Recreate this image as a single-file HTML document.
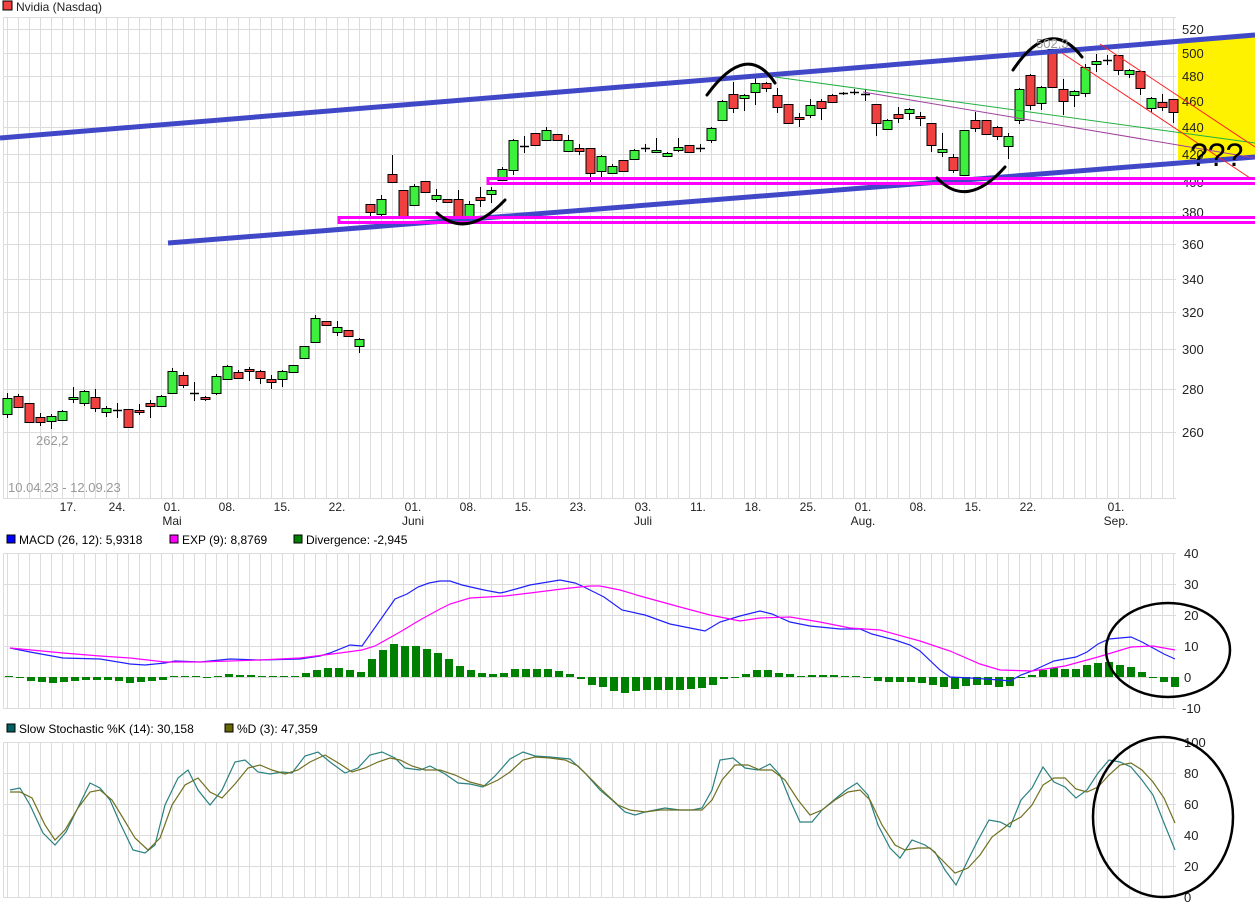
<!DOCTYPE html>
<html><head><meta charset="utf-8"><style>
body{margin:0;background:#fff;width:1255px;height:914px;overflow:hidden;font-family:"Liberation Sans",sans-serif}
svg{display:block}
</style></head><body>
<svg id="s" width="1255" height="914" xmlns="http://www.w3.org/2000/svg" font-family="Liberation Sans, sans-serif" font-size="12">
<rect width="1255" height="914" fill="#fff"/>
<g id="grid" stroke="#dcdcdc" stroke-width="1"></g>
<polygon points="1178,44 1255,36 1255,158 1178,160" fill="#fff200"/>
<g id="axis" fill="#222" font-size="13"></g>
<g id="candles"></g>
<!-- channels -->
<line x1="0" y1="138" x2="1255" y2="35" stroke="#4048c8" stroke-width="5"/>
<line x1="168" y1="243" x2="1255" y2="157" stroke="#4048c8" stroke-width="5"/>
<g fill="none" stroke="#ff00ff" stroke-width="3">
<path d="M1255,178.5 H488 V183.5 H1255"/>
<path d="M1255,217.5 H339 V222.5 H1255"/>
</g>
<line x1="775" y1="77" x2="1255" y2="143" stroke="#20b040" stroke-width="1"/>
<line x1="863" y1="92" x2="1255" y2="158" stroke="#a040a0" stroke-width="1"/>
<line x1="1100" y1="44" x2="1255" y2="147" stroke="#ff2020" stroke-width="1"/>
<line x1="1062" y1="53" x2="1250" y2="178" stroke="#ff2020" stroke-width="1"/>
<g fill="none" stroke="#000" stroke-width="3" stroke-linecap="round">
<path d="M437,213 Q467,240 505,200"/>
<path d="M707,95 Q747,40 775,83"/>
<path d="M937,178 Q967,210 1005,167"/>
<path d="M1013,70 Q1050,15 1082,57"/>
</g>
<text x="1036" y="48" fill="#999" font-size="13">502,3</text>
<text x="36" y="445" fill="#999" font-size="13">262,2</text>
<text x="8" y="492" fill="#999" font-size="13">10.04.23 - 12.09.23</text>
<text x="1190" y="166" fill="#000" font-size="32">???</text>
<!-- title -->
<rect x="3" y="1" width="9" height="9" fill="#f04040" stroke="#000" stroke-width="1"/>
<text x="16" y="11" fill="#222" font-size="12">Nvidia (Nasdaq)</text>
<g id="dates" fill="#222" font-size="12" text-anchor="middle"></g>
<!-- MACD legend -->
<rect x="7" y="535" width="8" height="8" fill="#0000ff" stroke="#000"/>
<text x="19" y="544">MACD (26, 12): 5,9318</text>
<rect x="170" y="535" width="8" height="8" fill="#ff00ff" stroke="#000"/>
<text x="182" y="544">EXP (9): 8,8769</text>
<rect x="294" y="535" width="8" height="8" fill="#008000" stroke="#000"/>
<text x="306" y="544">Divergence: -2,945</text>
<rect x="7" y="724" width="8" height="8" fill="#006060" stroke="#000"/>
<text x="19" y="733">Slow Stochastic %K (14): 30,158</text>
<rect x="225" y="724" width="8" height="8" fill="#666600" stroke="#000"/>
<text x="237" y="733">%D (3): 47,359</text>
<g id="macd"></g>
<ellipse cx="1168" cy="650" rx="62" ry="47" fill="none" stroke="#000" stroke-width="2.5"/>
<ellipse cx="1163" cy="817" rx="70" ry="80" fill="none" stroke="#000" stroke-width="2.5"/>
</svg>
<script>
var NS="http://www.w3.org/2000/svg";
function el(p,t,a,txt){var e=document.createElementNS(NS,t);for(var k in a)e.setAttribute(k,a[k]);if(txt!=null)e.textContent=txt;p.appendChild(e);return e;}
var g=document.getElementById('grid'),ax=document.getElementById('axis');
function vgrid(y1,y2){for(var x=7;x<=1176;x+=11)el(g,'line',{x1:x+.5,y1:y1,x2:x+.5,y2:y2});el(g,'line',{x1:3.5,y1:y1,x2:3.5,y2:y2});}
vgrid(17,498);vgrid(553,708);vgrid(742,897);
var pl=[[520,29],[500,53],[480,76],[460,101],[440,127],[420,154],[400,182],[380,212],[360,244],[340,279],[320,312],[300,349],[280,389],[260,432]];
[17,498].forEach(function(y){el(g,'line',{x1:3,y1:y+.5,x2:1176,y2:y+.5});});
pl.forEach(function(p){el(g,'line',{x1:3,y1:p[1]+.5,x2:1176,y2:p[1]+.5});el(ax,'text',{x:1182,y:p[1]+5},p[0]);});
[[40,553],[30,584],[20,615],[10,646],[0,677],[-10,708]].forEach(function(p){el(g,'line',{x1:3,y1:p[1]+.5,x2:1176,y2:p[1]+.5});el(ax,'text',{x:p[0]<0?1182:1184,y:p[1]+5},p[0]);});
[[100,742],[80,773],[60,804],[40,835],[20,866],[0,897]].forEach(function(p){el(g,'line',{x1:3,y1:p[1]+.5,x2:1176,y2:p[1]+.5});el(ax,'text',{x:1184,y:p[1]+5},p[0]);});
// dates
var d=document.getElementById('dates');
[["17.",68],["24.",117],["01.",172],["08.",227],["15.",282],["22.",337],["01.",413],["08.",468],["15.",523],["23.",578],["03.",643],["11.",698],["18.",753],["25.",808],["01.",863],["08.",918],["15.",973],["22.",1028],["01.",1116]].forEach(function(a){el(d,'text',{x:a[1],y:511},a[0]);});
[["Mai",172],["Juni",413],["Juli",643],["Aug.",863],["Sep.",1116]].forEach(function(a){el(d,'text',{x:a[1],y:525},a[0]);});
// candles [o,c,h,l] in px (o>c => green (price up) when open y > close y)
var C=[
['g',414,398,393,418],['r',396,407,394,408],['r',403,422,403,423],['r',417,422,413,426],['g',421,416,414,429],['g',420,411,410,421],['g',399,397,387,403],['g',403,391,390,406],['r',397,408,389,412],['g',412,408,406,417],['d',410,410,403,418],['r',409,427,409,428],['r',410,412,404,415],['r',403,406,400,418],['g',406,396,395,407],
['g',393,371,368,394],['r',375,385,372,388],['d',393,393,382,401],['r',397,399,396,401],['g',393,376,374,395],['g',379,366,365,380],['r',372,378,370,379],['r',369,371,367,381],['r',371,378,370,384],['r',379,382,375,389],['g',379,371,370,387],['g',372,365,365,373],['g',358,346,352,359],['g',342,318,315,343],['r',321,325,321,326],['g',332,327,321,336],['r',330,336,330,337],['g',346,339,338,353],
['r',204,212,204,217],['g',214,199,195,219],['r',174,182,155,183],['r',190,216,190,216],['g',205,186,184,206],['r',181,192,181,193],['g',199,195,189,202],['r',199,202,199,203],['r',199,219,190,220],['g',219,204,201,220],['r',197,200,187,207],['g',194,190,187,203],['g',180,169,167,181],['g',170,140,139,175],['d',146,146,136,153],['r',133,145,133,146],['g',140,130,127,141],['r',134,140,134,141],['g',151,140,135,152],['r',148,151,144,155],['r',148,173,148,182],['g',171,156,155,177],['g',173,166,164,174],['r',160,171,160,172],['g',159,150,149,160],['d',148,148,144,152],['g',152,150,138,153],['g',156,153,152,157],['g',150,147,138,152],['r',145,152,145,153],['d',148,148,144,152],['g',140,128,127,143],
['g',120,101,100,121],['r',94,108,82,113],['g',98,95,94,111],['g',92,83,78,105],['r',83,88,82,92],['r',95,107,88,113],['r',104,123,104,124],['r',117,119,113,127],['g',115,105,99,118],['r',101,108,99,120],['r',95,102,94,103],['d',93,93,92,95],['d',92,92,89,95],['d',94,94,89,101],['r',104,123,104,136],['g',129,120,119,130],['r',114,118,107,123],['g',113,109,108,120],['r',116,118,112,126],['r',123,145,123,152],['g',152,149,133,157],['r',157,170,154,173],['g',175,130,130,176],['r',120,128,112,132],['r',120,134,120,135],['r',127,136,126,140],['g',146,136,133,159],
['g',120,89,88,124],['r',75,105,74,110],['g',103,87,86,110],['r',49,87,49,88],['r',89,101,79,115],['g',95,91,90,107],['g',93,67,64,97],['g',64,61,54,72],['d',60,60,55,65],['r',55,70,55,75],['g',74,70,69,78],['r',71,88,71,95],['g',108,98,97,112],['r',102,107,94,111],['r',99,112,99,123]];
var cg=document.getElementById('candles');
C.forEach(function(c,i){var x=7+11*i;
el(cg,'line',{x1:x+.5,y1:c[3],x2:x+.5,y2:c[4],stroke:'#000','stroke-width':1});
if(c[0]=='d'){el(cg,'line',{x1:x-4,y1:c[1]+.5,x2:x+5,y2:c[1]+.5,stroke:'#000','stroke-width':1.5});}
else{var t=Math.min(c[1],c[2]),b=Math.max(c[1],c[2]);if(b-t<2)b=t+2;
el(cg,'rect',{x:x-4,y:t+.5,width:9,height:b-t,fill:c[0]=='g'?'#3ef03e':'#f04040',stroke:'#000','stroke-width':1});}});
// MACD
var m=document.getElementById('macd');
var H=[0,-1,-4,-5,-6,-5,-4,-3,-3,-3,-4,-6,-5,-4,-3,1,1,1,-1,1,3,2,2,1,0,1,1,4,7,9,9,7,5,18,27,33,31,31,28,24,18,11,7,4,3,4,8,8,8,8,6,3,-2,-8,-10,-14,-16,-14,-13,-13,-13,-13,-12,-11,-8,-2,-1,3,7,7,4,3,1,2,2,2,1,1,-1,-4,-5,-5,-5,-6,-8,-10,-12,-9,-8,-8,-10,-9,-1,2,7,9,8,8,12,14,15,12,10,5,-1,-5,-10];
var n=H.length;H.forEach(function(h,i){var x=1175-11*(n-1-i);if(h==0)h=1;
el(m,'rect',{x:x-4,y:h>0?677-h:677,width:8,height:Math.abs(h),fill:'#008000'});});
function pline(pts,col){el(m,'polyline',{points:pts,fill:'none',stroke:col,'stroke-width':1.2});}
pline("10,648 30,652 63,658 100,659 130,664 145,665 165,663 175,661 200,662 230,659 260,660 300,659 320,656 330,653 350,645 362,646 395,599 407,594 418,587 429,583 440,581 450,581 462,585 484,590 500,593 505,592 516,589 530,585 548,582 560,580 575,583 582,586 590,590 604,597 622,610 645,615 670,624 690,628 705,631 720,622 740,616 760,611 772,614 790,622 810,626 840,629 860,629 872,634 895,640 910,645 920,651 940,670 950,677 970,678 1000,680 1010,681 1021,675 1032,671 1043,666 1054,661 1065,659 1076,657 1087,652 1098,644 1109,639 1120,638 1131,637 1142,642 1153,648 1164,654 1175,659","#2020ff");
pline("10,648 63,653 100,656 130,658 165,662 200,662 260,660 300,658 340,653 362,650 375,646 400,632 420,620 440,609 450,604 470,598 505,596 530,593 570,588 590,586 600,586 620,590 640,596 680,607 710,615 740,621 760,618 790,617 820,622 850,628 880,630 920,641 950,651 980,664 1000,670 1032,671 1065,666 1098,657 1131,647 1153,646 1175,650","#ff00ff");
function sline(pts,col){el(m,'polyline',{points:pts,fill:'none',stroke:col,'stroke-width':1.2});}
sline("10,790 20,788 30,805 43,833 55,845 66,832 90,783 100,788 110,800 120,823 133,850 145,853 155,845 165,805 178,778 188,770 198,790 210,805 222,790 235,762 245,760 258,772 270,774 282,772 292,773 305,756 318,752 330,762 345,773 358,768 370,755 382,752 395,758 405,768 420,770 430,766 445,774 458,783 470,784 483,787 495,776 510,759 523,752 535,756 550,757 570,759 585,773 600,790 612,800 625,812 635,815 645,812 655,810 665,808 680,810 692,810 702,808 712,790 720,760 733,758 745,768 758,770 770,764 780,775 790,800 800,822 812,822 822,810 834,800 846,790 857,783 868,795 878,825 890,848 900,858 912,840 925,845 935,852 945,870 956,885 967,862 978,840 989,820 1000,822 1010,827 1021,800 1032,788 1043,767 1054,782 1065,787 1076,798 1087,790 1098,773 1109,760 1120,762 1131,767 1142,780 1153,795 1164,823 1175,850","#2a8080");
sline("10,792 20,792 32,798 45,825 55,840 65,830 78,808 90,792 100,790 112,800 123,818 135,838 148,850 160,838 172,805 185,785 198,778 210,792 222,798 235,784 248,768 260,765 272,770 285,774 298,770 310,762 325,755 340,764 352,772 365,768 378,762 390,758 400,760 412,766 425,770 440,770 455,775 470,782 485,786 498,780 510,772 523,760 535,757 550,758 565,760 578,766 592,780 605,793 618,805 630,810 645,812 660,810 675,810 690,810 702,810 712,800 722,780 735,765 748,765 760,770 772,770 785,780 798,800 810,815 822,810 835,800 848,792 860,790 870,800 882,825 895,845 905,850 918,848 930,848 942,860 955,873 968,868 980,855 992,837 1004,828 1010,823 1021,817 1032,805 1043,785 1054,778 1065,778 1076,789 1087,792 1098,787 1109,775 1120,765 1131,763 1142,770 1153,782 1164,798 1175,823","#707020");
</script>
</body></html>
